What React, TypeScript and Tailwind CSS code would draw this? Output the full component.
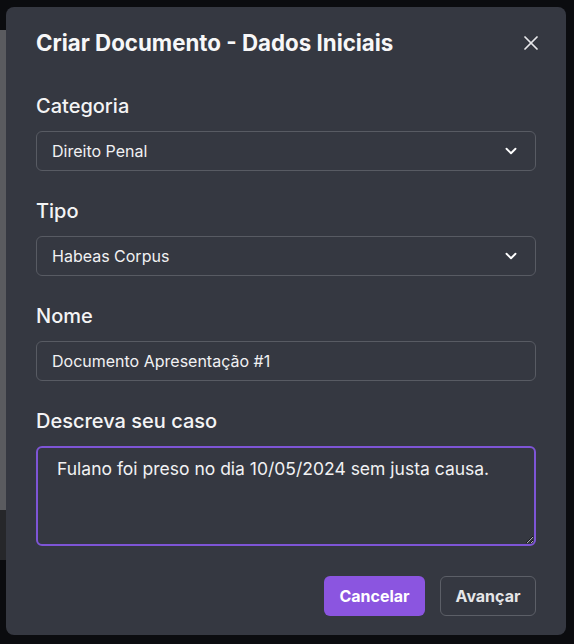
import { ChevronDown, X } from "lucide-react";
import React from "react";

const fieldClass =
  "flex h-10 w-full items-center rounded-md border border-[#585b63] bg-[#353841] pl-[15px] pr-[15px] text-[16px] text-[#f1f1f3]";

const Label = ({ children }: { children: React.ReactNode }) => (
  <label className="mb-[11px] block text-[20px] font-medium leading-7 text-[#f4f4f5]">
    {children}
  </label>
);

const SelectBox = ({ value }: { value: string }) => (
  <div className={fieldClass + " justify-between"}>
    <span>{value}</span>
    <ChevronDown size={18} strokeWidth={2.5} className="text-white" />
  </div>
);

export default function App() {
  return (
    <div
      className="relative h-[644px] w-full overflow-hidden bg-[#0b0c0f]"
      style={{ fontFamily: "Inter, 'Noto Sans', sans-serif" }}
    >
      {/* page behind the overlay */}
      <div className="flex flex-col pt-[30px]">
        <div className="h-[480px] w-[8px] bg-[#5a5b5f]" />
        <div className="h-[50px] w-[8px] bg-[#26272a]" />
      </div>

      <div className="absolute left-[6px] top-[7px] flex h-[628px] w-[560px] flex-col rounded-lg bg-[#353841] px-[30px] pt-5">
        <div className="mb-[33px] flex items-center justify-between">
          <h2 className="text-[22.3px] font-bold leading-8 text-[#f7f7f8]">
            Criar Documento - Dados Iniciais
          </h2>
          <X size={24} strokeWidth={1.75} className="-mr-[7px] text-[#e8e8ea]" />
        </div>

        <div className="flex flex-col gap-[26px]">
          <div>
            <Label>Categoria</Label>
            <SelectBox value="Direito Penal" />
          </div>
          <div>
            <Label>Tipo</Label>
            <SelectBox value="Habeas Corpus" />
          </div>
          <div>
            <Label>Nome</Label>
            <div className={fieldClass}>Documento Apresentação #1</div>
          </div>
          <div>
            <Label>Descreva seu caso</Label>
            <textarea
              defaultValue="Fulano foi preso no dia 10/05/2024 sem justa causa."
              className="block h-[100px] w-full rounded-md border-2 border-[#7e55d6] bg-[#353841] px-[19px] pt-[7px] text-[17.5px] leading-7 text-[#f1f1f3] outline-none"
            />
          </div>
        </div>

        <div className="mt-[30px] flex justify-end gap-[15px]">
          <button className="h-10 w-[101px] rounded-md bg-[#8b55e0] text-[16px] font-bold text-white">
            Cancelar
          </button>
          <button className="h-10 w-[96px] rounded-md border border-[#5c5f67] text-[16px] font-bold text-[#e6e6e8]">
            Avançar
          </button>
        </div>
      </div>
    </div>
  );
}
